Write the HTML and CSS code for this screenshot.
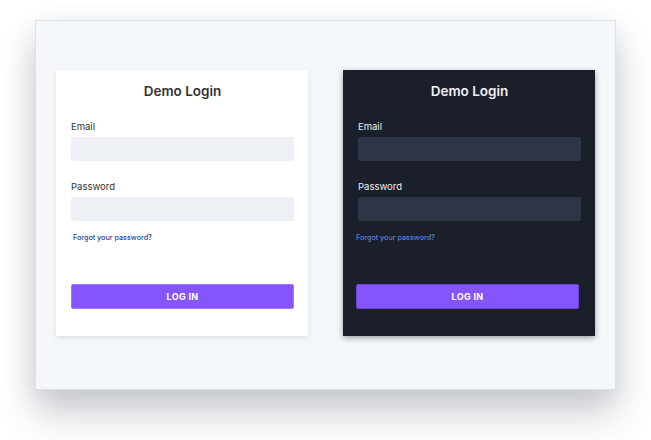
FILE: index.html
```html
<!DOCTYPE html>
<html lang="en">
<head>
  <meta charset="UTF-8" />
  <meta name="viewport" content="width=device-width, initial-scale=1.0" />
  <title>Demo Login</title>
  <link rel="stylesheet" href="styles.css">
</head>
<body>
  <div class="frame">
    <!-- light theme -->
    <form class="card card-light">
      <h1>Demo Login</h1>
      <label>Email</label>
      <input type="text" />
      <label class="pw">Password</label>
      <input type="password" />
      <a class="forgot" href="#">Forgot your password?</a>
      <button type="button" class="btn">LOG IN</button>
    </form>

    <!-- dark theme -->
    <form class="card card-dark">
      <h1>Demo Login</h1>
      <label>Email</label>
      <input type="text" />
      <label class="pw">Password</label>
      <input type="password" />
      <a class="forgot" href="#">Forgot your password?</a>
      <button type="button" class="btn">LOG IN</button>
    </form>
  </div>
</body>
</html>
```

FILE: styles.css
```css
body {
  margin: 0;
  padding: 20px 35px 0;
  min-height: 100vh;
  box-sizing: border-box;
  font-family: Inter, "Noto Sans", sans-serif;
  background: #fff;
}

.frame {
  box-sizing: border-box;
  height: 370px;
  background: #f5f8fb;
  border: 1px solid #dbe1e8;
  box-shadow: 0 24px 36px rgba(30, 40, 60, 0.22), 0 6px 24px rgba(30, 40, 60, 0.08);
  display: grid;
  grid-template-columns: 252px 252px;
  justify-content: center;
  column-gap: 35px;
  padding-top: 49px;
  align-items: start;
}

.card {
  box-sizing: border-box;
  height: 266px;
  padding: 12px 14px 0 15px;
  display: flex;
  flex-direction: column;
}

.card-light {
  background: #fff;
  color: #333;
  box-shadow: 0 2px 6px rgba(40, 60, 90, 0.12);
}

.card-dark {
  background: #1b1f2a;
  color: #eef0f4;
  box-shadow: 0 2px 6px rgba(20, 25, 40, 0.4);
}

.card h1 {
  margin: 0 0 21px;
  text-align: center;
  font-size: 13.5px;
  font-weight: 600;
  line-height: 18px;
}

.card label {
  font-size: 9.5px;
  line-height: 12px;
  margin-bottom: 4px;
}

.card label.pw {
  margin-top: 20px;
}

.card input {
  box-sizing: border-box;
  height: 24px;
  border: none;
  border-radius: 2px;
  outline: none;
  margin: 0;
}

.card-light input { background: #edf1f5; }
.card-dark input { background: #2e3546; }

.forgot {
  margin: 12px 0 0 2px;
  font-size: 7.2px;
  font-weight: 500;
  line-height: 10px;
  text-decoration: none;
}

.card-light .forgot { color: #2d3e9a; }
.card-dark .forgot { color: #5a80d8; margin-left: -2px; }

.btn {
  margin-top: 41px;
  height: 25px;
  border: 1px solid #9b7cff;
  border-radius: 2px;
  background: #8455fb;
  color: #fff;
  font-family: inherit;
  font-size: 9px;
  font-weight: 700;
  letter-spacing: 0.3px;
  cursor: pointer;
}

.card-dark .btn {
  border-color: #6c46d8;
  margin-left: -2px;
  margin-right: 2px;
}
```
